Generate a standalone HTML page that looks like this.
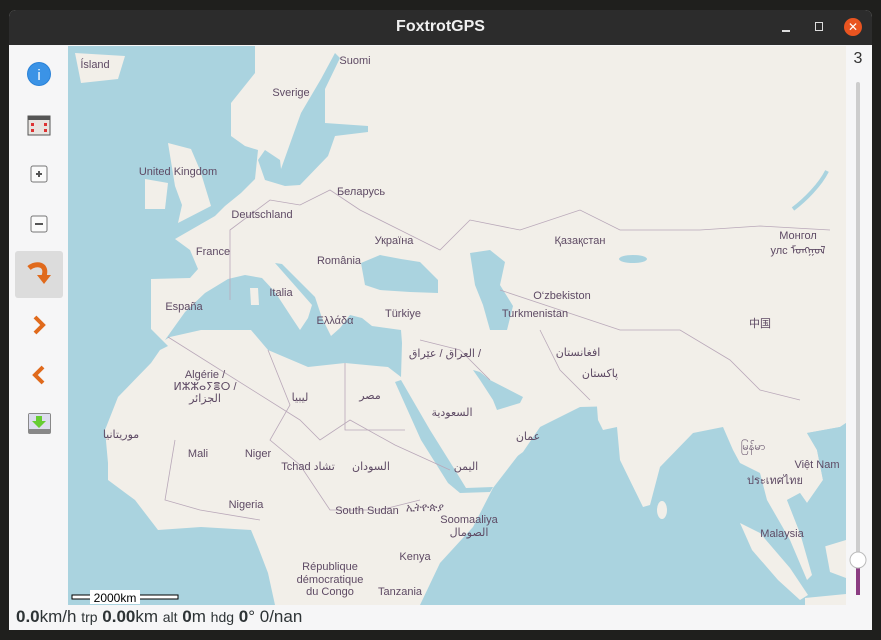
<!DOCTYPE html>
<html><head><meta charset="utf-8"><style>
html,body{margin:0;padding:0;width:881px;height:640px;overflow:hidden;background:#1f1f1d;font-family:"Liberation Sans",sans-serif}
#win{position:absolute;left:9px;top:10px;width:863px;height:620px;background:#f6f6f7;border-radius:7px 7px 0 0;overflow:hidden}
#title{position:absolute;left:0;top:0;width:863px;height:35px;background:#2c2c2c;color:#f0f0f0;font-weight:bold;font-size:16px;text-align:center;line-height:34px}
.st{position:absolute;left:16px;top:607px;font-size:17px;color:#2e3436}
.st b{font-weight:bold}.st s{text-decoration:none;font-size:14px}
</style></head><body>
<div id="win">
<div id="title">FoxtrotGPS</div>
<div style="position:absolute;left:773px;top:20px;width:8px;height:2px;background:#ddd"></div>
<div style="position:absolute;left:806px;top:12px;width:6px;height:7px;border:1.5px solid #ddd"></div>
<div style="position:absolute;left:835px;top:8px;width:18px;height:18px;border-radius:50%;background:#e95420;color:#fff;font-size:12px;text-align:center;line-height:18px">✕</div>
<div style="position:absolute;left:6px;top:241px;width:48px;height:47px;background:#dcdcdc;border-radius:3px"></div>
</div>
<svg width="881" height="640" style="position:absolute;left:0;top:0" font-family="Liberation Sans, DejaVu Sans, Noto Sans CJK SC, sans-serif">
<circle cx="39" cy="74" r="12" fill="#2a82d8"/><circle cx="39" cy="74" r="11" fill="#3b93e6"/>
<text x="39" y="80" fill="#fff" font-size="15" text-anchor="middle">i</text>
<rect x="28" y="116" width="22" height="19" fill="#e8e4e0" stroke="#555"/><rect x="28" y="116" width="22" height="4" fill="#555"/>
<rect x="31" y="123" width="3" height="3" fill="#d33"/><rect x="44" y="123" width="3" height="3" fill="#d33"/><rect x="31" y="129" width="3" height="3" fill="#d33"/><rect x="44" y="129" width="3" height="3" fill="#d33"/>
<rect x="31" y="166" width="16" height="16" rx="2" fill="#fafafa" stroke="#777"/><path d="M36 174h6M39 171v6" stroke="#555" stroke-width="2"/>
<rect x="31" y="216" width="16" height="16" rx="2" fill="#fafafa" stroke="#777"/><path d="M35 224h8" stroke="#555" stroke-width="2"/>
<path d="M29 268 C36 262 48 264 44 276" stroke="#e06a1c" stroke-width="5" fill="none"/><path d="M37 275 L51 275 L44 284 Z" fill="#e06a1c"/>
<path d="M35 317 L43 325 L35 333" stroke="#e06a1c" stroke-width="4" fill="none"/>
<path d="M43 367 L35 375 L43 383" stroke="#e06a1c" stroke-width="4" fill="none"/>
<rect x="28" y="413" width="23" height="21" rx="2" fill="#888"/><rect x="29" y="414" width="21" height="15" fill="#dde"/><path d="M36 416h6v5h4l-7 7-7-7h4z" fill="#6c3"/>
<svg x="68" y="46" width="778" height="559" viewBox="68 46 778 559">
<rect x="68" y="46" width="778" height="559" fill="#f2efe9"/>
<g fill="#aad3df">
<polygon points="68,46 255,46 255,73 231,103 231,136 245,146 258,150 255,179 241,193 225,206 215,216 175,239 190,250 198,269 190,278 151,279 151,329 168,346 160,350 151,363 118,397 105,430 108,463 108,480 135,500 158,530 201,527 251,530 258,547 268,573 275,605 68,605"/>
<polygon points="281,169 301,113 321,79 335,53 340,58 325,89 325,123 368,126 368,132 335,136 328,156 300,185 285,186 265,180 258,160 265,150 280,160"/>
<polygon points="165,340 185,312 205,293 228,279 245,275 262,278 275,292 292,318 300,330 308,318 312,305 290,280 275,263 282,264 315,297 322,318 331,336 340,328 350,315 362,318 372,326 401,330 402,343 401,377 388,367 345,363 308,367 268,350 251,330 201,330 170,337"/>
<polygon points="361,263 380,255 401,259 420,262 438,280 438,293 410,292 380,290 365,285"/>
<polygon points="470,253 490,250 505,262 500,285 513,306 507,330 490,330 483,305 475,285"/>
<polygon points="420,605 440,563 473,527 493,488 540,427 580,407 846,400 846,605"/>
</g>
<g fill="#f2efe9">
<polygon points="462,488 490,476 523,452 540,427 547,410 580,407 600,400 600,380 455,380"/>
<polygon points="598,420 603,430 617,427 620,460 643,507 650,505 660,467 693,433 723,427 733,450 740,463 760,473 767,500 790,540 807,580 812,575 800,533 787,500 800,493 807,503 823,480 817,450 807,433 840,427 846,423 846,380 595,380"/>
<polygon points="75,53 125,56 118,79 81,83"/>
<polygon points="168,143 191,149 200,170 211,206 178,223 182,205 175,186"/>
<polygon points="145,179 168,183 165,209 145,209"/>
<ellipse cx="662" cy="510" rx="5" ry="9"/>
<polygon points="740,523 760,533 790,568 808,595 800,600 778,580 752,550"/>
<polygon points="825,545 846,533 846,578 830,572"/>
<polygon points="805,598 846,594 846,605 805,605"/>
<polygon points="250,288 258,288 259,305 251,305"/>
</g>
<g fill="#aad3df">
<polygon points="395,382 401,380 430,430 455,470 466,488 493,487 490,492 460,493 448,483 421,440"/>
<polygon points="473,370 480,380 493,400 497,410 520,403 523,397 490,380 480,372"/>
<polygon points="787,500 800,493 807,503 823,480 817,450 807,433 840,427 846,423 846,540 823,547 800,533"/>
<ellipse cx="633" cy="259" rx="14" ry="4"/>
</g>
<path d="M793 209 C805 200 820 185 827 171" stroke="#aad3df" stroke-width="4" fill="none"/>
<g stroke="#b9a8b9" stroke-width="0.8" fill="none">
<path d="M168 337 L300 420 L320 440 L350 420 L395 445 L450 470"/><path d="M345 363 L345 430 L405 430"/><path d="M268 350 L290 405 L270 440 L300 465 L330 510 L380 510 L420 500"/>
<path d="M175 440 L165 500 L200 510 L260 520"/><path d="M230 300 L230 230 L270 200 L300 205 L330 190 L360 210 L400 230 L440 250 L470 220 L520 230 L580 210 L620 230 L700 230 L760 226 L830 230"/>
<path d="M500 290 L560 310 L620 330 L680 330 L730 360 L760 390 L800 400"/><path d="M540 330 L560 370 L590 400"/><path d="M420 340 L460 350 L490 380"/>
</g>
<g fill="#5e4a64" font-size="11" text-anchor="middle">
<text x="95" y="68">Ísland</text><text x="355" y="64">Suomi</text><text x="291" y="96">Sverige</text><text x="178" y="175">United Kingdom</text>
<text x="361" y="195">Беларусь</text><text x="262" y="218">Deutschland</text><text x="394" y="244">Україна</text><text x="213" y="255">France</text>
<text x="339" y="264">România</text><text x="580" y="244">Қазақстан</text><text x="798" y="239">Монгол</text><text x="798" y="254">улс ᠮᠣᠩᠭᠣᠯ</text>
<text x="184" y="310">España</text><text x="281" y="296">Italia</text><text x="335" y="324">Ελλάδα</text><text x="403" y="317">Türkiye</text>
<text x="562" y="299">O‘zbekiston</text><text x="535" y="317">Turkmenistan</text><text x="760" y="327">中国</text>
<text x="205" y="378">Algérie /</text><text x="205" y="390">ⵍⵣⵣⴰⵢⴻⵔ /</text><text x="205" y="402">الجزائر</text>
<text x="445" y="357">العراق / عێراق /</text><text x="370" y="399">مصر</text><text x="300" y="401">ليبيا</text><text x="452" y="416">السعودية</text>
<text x="578" y="356">افغانستان</text><text x="600" y="377">پاکستان</text><text x="121" y="438">موريتانيا</text>
<text x="198" y="457">Mali</text><text x="258" y="457">Niger</text><text x="308" y="470">Tchad تشاد</text><text x="371" y="470">السودان</text>
<text x="528" y="440">عمان</text><text x="466" y="470">اليمن</text><text x="817" y="468">Việt Nam</text><text x="775" y="484">ประเทศไทย</text>
<text x="753" y="450">မြန်မာ</text><text x="246" y="508">Nigeria</text><text x="367" y="514">South Sudan</text><text x="425" y="511">ኢትዮጵያ</text>
<text x="469" y="523">Soomaaliya</text><text x="469" y="536">الصومال</text><text x="415" y="560">Kenya</text><text x="782" y="537">Malaysia</text>
<text x="330" y="570">République</text><text x="330" y="583">démocratique</text><text x="330" y="595">du Congo</text><text x="400" y="595">Tanzania</text>
</g>
<rect x="72" y="595" width="106" height="4" fill="#fff" stroke="#000" stroke-width="1"/>
<rect x="90" y="590" width="50" height="14" fill="#fff"/>
<text x="115" y="602" font-size="12" fill="#000" text-anchor="middle">2000km</text>
</svg>
<text x="858" y="63" font-size="16" fill="#333" text-anchor="middle">3</text>
<rect x="856" y="82" width="4" height="513" rx="2" fill="#cdcdcd"/>
<rect x="856" y="565" width="4" height="30" fill="#8b3d82"/>
<circle cx="858" cy="560" r="8" fill="#fff" stroke="#bbb"/>
</svg>
<div class="st"><b>0.0</b>km/h <s>trp</s> <b>0.00</b>km <s>alt</s> <b>0</b>m <s>hdg</s> <b>0</b>° 0/nan</div>
</body></html>
